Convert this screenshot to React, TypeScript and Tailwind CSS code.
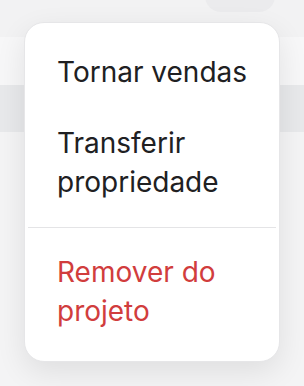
import React from "react";

export default function App() {
  return (
    <div
      className="relative w-[304px] h-[386px] overflow-hidden bg-[#f4f4f5]"
      style={{ fontFamily: "Inter, 'Noto Sans', sans-serif" }}
    >
      {/* underlying page */}
      <div className="flex flex-col">
        <div className="h-[37px] bg-[#f2f2f3] relative">
          <div className="absolute left-[205px] top-[-20px] w-[70px] h-[32px] rounded-[16px] bg-[#ebebed]" />
        </div>
        <div className="h-[48px] bg-[#f7f7f8]" />
        <div className="h-[47px] bg-[#e8e9eb]" />
        <div className="flex-1 bg-[#f4f4f5]" />
      </div>

      {/* menu */}
      <div className="absolute left-[24px] top-[22px] w-[256px] h-[340px] rounded-[20px] bg-white border border-[#e6e6e8] shadow-[0_10px_30px_rgba(0,0,0,0.09)] pt-[14px] pb-[12px] flex flex-col">
        <div className="pl-[32px] pr-[20px] py-[16px] text-[28px] leading-[39px] text-[#202022]">
          Tornar vendas
        </div>
        <div className="pl-[32px] pr-[20px] py-[16px] text-[28px] leading-[39px] text-[#202022]">
          Transferir propriedade
        </div>
        <div className="mx-[3px] my-[9px] h-px bg-[#e4e4e6]" />
        <div className="pl-[32px] pr-[20px] py-[16px] text-[28px] leading-[39px] text-[#d13d3d]">
          Remover do projeto
        </div>
      </div>
    </div>
  );
}
